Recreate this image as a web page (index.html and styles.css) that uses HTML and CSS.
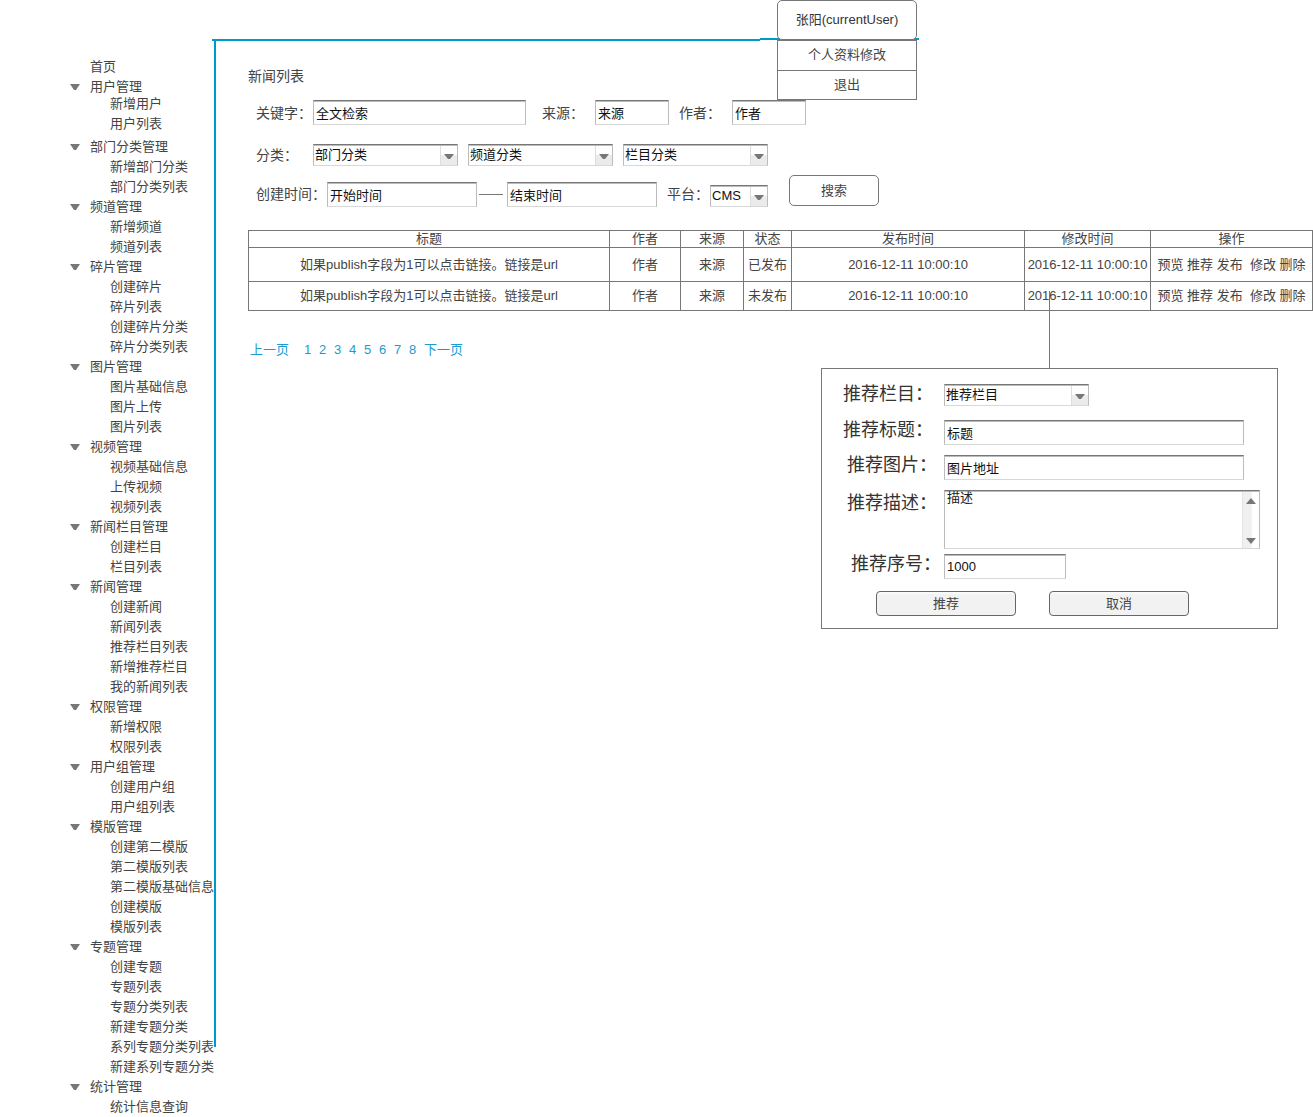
FILE: index.html
```html
<!DOCTYPE html>
<html lang="zh-CN">
<head>
<meta charset="utf-8">
<meta name="viewport" content="width=device-width, initial-scale=1">
<title>新闻列表</title>
<link rel="stylesheet" href="styles.css">
</head>
<body>
<div class="page">
  <nav class="sidebar">
    <a class="home" href="#">首页</a>
    <details class="compact" open><summary>用户管理</summary><ul><li><a href="#">新增用户</a></li><li><a href="#">用户列表</a></li></ul></details>
    <details open><summary>部门分类管理</summary><ul><li><a href="#">新增部门分类</a></li><li><a href="#">部门分类列表</a></li></ul></details>
    <details open><summary>频道管理</summary><ul><li><a href="#">新增频道</a></li><li><a href="#">频道列表</a></li></ul></details>
    <details open><summary>碎片管理</summary><ul><li><a href="#">创建碎片</a></li><li><a href="#">碎片列表</a></li><li><a href="#">创建碎片分类</a></li><li><a href="#">碎片分类列表</a></li></ul></details>
    <details open><summary>图片管理</summary><ul><li><a href="#">图片基础信息</a></li><li><a href="#">图片上传</a></li><li><a href="#">图片列表</a></li></ul></details>
    <details open><summary>视频管理</summary><ul><li><a href="#">视频基础信息</a></li><li><a href="#">上传视频</a></li><li><a href="#">视频列表</a></li></ul></details>
    <details open><summary>新闻栏目管理</summary><ul><li><a href="#">创建栏目</a></li><li><a href="#">栏目列表</a></li></ul></details>
    <details open><summary>新闻管理</summary><ul><li><a href="#">创建新闻</a></li><li><a href="#">新闻列表</a></li><li><a href="#">推荐栏目列表</a></li><li><a href="#">新增推荐栏目</a></li><li><a href="#">我的新闻列表</a></li></ul></details>
    <details open><summary>权限管理</summary><ul><li><a href="#">新增权限</a></li><li><a href="#">权限列表</a></li></ul></details>
    <details open><summary>用户组管理</summary><ul><li><a href="#">创建用户组</a></li><li><a href="#">用户组列表</a></li></ul></details>
    <details open><summary>模版管理</summary><ul><li><a href="#">创建第二模版</a></li><li><a href="#">第二模版列表</a></li><li><a href="#">第二模版基础信息</a></li><li><a href="#">创建模版</a></li><li><a href="#">模版列表</a></li></ul></details>
    <details open><summary>专题管理</summary><ul><li><a href="#">创建专题</a></li><li><a href="#">专题列表</a></li><li><a href="#">专题分类列表</a></li><li><a href="#">新建专题分类</a></li><li><a href="#">系列专题分类列表</a></li><li><a href="#">新建系列专题分类</a></li></ul></details>
    <details open><summary>统计管理</summary><ul><li><a href="#">统计信息查询</a></li></ul></details>
  </nav>

  <div class="content">
    <header class="topbar">
      <div class="rule"></div>
      <div class="rule-end">
        <div class="user-menu">
          <button class="user-name" type="button">张阳(currentUser)</button>
          <ul>
            <li><a href="#">个人资料修改</a></li>
            <li><a href="#">退出</a></li>
          </ul>
        </div>
      </div>
    </header>

    <main class="main">
      <h1>新闻列表</h1>

      <form class="search">
        <div class="row row-text">
          <label for="keyword">关键字：</label>
          <input class="box keyword" id="keyword" type="text" value="全文检索">
          <label class="next" for="source">来源：</label>
          <input class="box short" id="source" type="text" value="来源">
          <label class="near" for="author">作者：</label>
          <input class="box short" id="author" type="text" value="作者">
        </div>
        <div class="row row-category">
          <label for="department">分类：</label>
          <div class="select"><select id="department"><option>部门分类</option></select></div>
          <div class="select"><select aria-label="频道分类"><option>频道分类</option></select></div>
          <div class="select"><select aria-label="栏目分类"><option>栏目分类</option></select></div>
        </div>
        <div class="row row-date">
          <label for="start">创建时间：</label>
          <input class="box date" id="start" type="text" value="开始时间">
          <span class="dash"></span>
          <input class="box date" type="text" value="结束时间" aria-label="结束时间">
          <label class="near" for="platform">平台：</label>
          <div class="select platform"><select id="platform"><option>CMS</option></select></div>
          <button class="search-button" type="submit">搜索</button>
        </div>
      </form>

      <table class="news">
        <colgroup><col class="c-title"><col class="c-author"><col class="c-source"><col class="c-state"><col class="c-publish"><col class="c-modify"><col class="c-action"></colgroup>
        <thead>
          <tr><th>标题</th><th>作者</th><th>来源</th><th>状态</th><th>发布时间</th><th>修改时间</th><th>操作</th></tr>
        </thead>
        <tbody>
          <tr>
            <td>如果publish字段为1可以点击链接。链接是url</td><td>作者</td><td>来源</td><td>已发布</td><td>2016-12-11 10:00:10</td><td>2016-12-11 10:00:10</td>
            <td><a href="#">预览</a> <a href="#">推荐</a> <a href="#">发布</a>&nbsp; <a href="#">修改</a> <a href="#">删除</a></td>
          </tr>
          <tr>
            <td>如果publish字段为1可以点击链接。链接是url</td><td>作者</td><td>来源</td><td>未发布</td><td>2016-12-11 10:00:10</td><td>2016-12-11 10:00:10</td>
            <td><a href="#">预览</a> <a href="#">推荐</a> <a href="#">发布</a>&nbsp; <a href="#">修改</a> <a href="#">删除</a></td>
          </tr>
        </tbody>
      </table>

      <nav class="pager">
        <a class="step" href="#">上一页</a>
        <a href="#">1</a><a href="#">2</a><a href="#">3</a><a href="#">4</a><a href="#">5</a><a href="#">6</a><a href="#">7</a><a href="#">8</a>
        <a class="step" href="#">下一页</a>
      </nav>

      <form class="recommend">
        <div class="field field-column">
          <label for="r-column">推荐栏目：</label>
          <div class="select"><select id="r-column"><option>推荐栏目</option></select></div>
        </div>
        <div class="field">
          <label for="r-title">推荐标题：</label>
          <input class="box long" id="r-title" type="text" value="标题">
        </div>
        <div class="field indent">
          <label for="r-image">推荐图片：</label>
          <input class="box long" id="r-image" type="text" value="图片地址">
        </div>
        <div class="field field-area indent">
          <label for="r-desc">推荐描述：</label>
          <div class="area">
            <textarea id="r-desc">描述</textarea>
            <div class="scroll">
              <svg width="10" height="6" viewBox="0 0 10 6"><path d="M5 0L10 6H0Z" fill="#777"/></svg>
              <svg width="10" height="6" viewBox="0 0 10 6"><path d="M0 0H10L5 6Z" fill="#777"/></svg>
            </div>
          </div>
        </div>
        <div class="field indent-more">
          <label for="r-order">推荐序号：</label>
          <input class="box order" id="r-order" type="text" value="1000">
        </div>
        <div class="actions">
          <button type="submit">推荐</button>
          <button type="button">取消</button>
        </div>
      </form>
    </main>
  </div>
</div>
</body>
</html>
```
FILE: styles.css
```css
* {
  box-sizing: border-box;
}

body {
  margin: 0;
  background: #fff;
  color: #444;
  font: 13px/20px "Liberation Sans", "Noto Sans CJK SC", sans-serif;
}

ul {
  list-style: none;
  margin: 0;
  padding: 0;
}

a {
  color: inherit;
  text-decoration: none;
}

input,
select,
textarea,
button {
  margin: 0;
  font: inherit;
}

.page {
  display: grid;
  grid-template-columns: 212px 1fr;
}

/* Sidebar tree */
.sidebar {
  padding: 57px 0 0 70px;
  white-space: nowrap;
}

.sidebar .home {
  display: block;
  padding-left: 20px;
}

.sidebar summary {
  display: flex;
  align-items: center;
  gap: 10px;
  list-style: none;
  cursor: pointer;
}

.sidebar summary::before {
  content: "";
  width: 10px;
  height: 6px;
  background: #777;
  clip-path: polygon(0 0, 100% 0, 60% 100%, 40% 100%);
}

.sidebar ul {
  padding-left: 40px;
}

.sidebar li {
  height: 20px;
}

.sidebar .compact ul {
  margin: -3px 0 3px;
}

/* Top rule and user menu */
.content {
  display: flex;
  flex-direction: column;
}

.topbar {
  display: flex;
  align-items: flex-end;
  height: 41px;
}

.topbar::after {
  content: "";
  flex: 394 0 0;
}

.rule {
  flex: 548 0 0;
  height: 2px;
  background: #0099cc;
}

.rule-end {
  position: relative;
  flex: 159 0 0;
  height: 3px;
  border-bottom: 1px solid #fff;
  background: #0099cc;
}

.user-menu {
  position: absolute;
  top: -38px;
  left: 17px;
  width: 140px;
  text-align: center;
}

.user-name {
  display: block;
  width: 100%;
  height: 40px;
  padding: 0;
  border: 1px solid #777;
  border-radius: 5px;
  background: #fff;
  color: #333;
}

.user-menu ul {
  border: 1px solid #777;
  background: #fff;
}

.user-menu li {
  height: 29px;
  line-height: 28px;
}

.user-menu li + li {
  border-top: 1px solid #777;
}

/* Main column */
.main {
  flex: 1;
  margin: 0 0 70px 2px;
  padding: 25px 0 0 32px;
  border-left: 2px solid #0099cc;
}

h1 {
  margin: 0 0 14px;
  font-size: 14px;
  font-weight: 400;
  line-height: 20px;
}

.box {
  width: 150px;
  height: 25px;
  padding: 0 2px 1px;
  border: 1px solid #bbb;
  border-top-color: #777;
  border-bottom-color: #d8d8d8;
  border-radius: 0;
  background: #fff;
  box-shadow: inset 0 1px #bbb;
  color: #111;
}

.select {
  position: relative;
  width: 145px;
  height: 22px;
}

.select select {
  appearance: none;
  display: block;
  width: 100%;
  height: 100%;
  padding: 0 18px 0 1px;
  border: 1px solid #bbb;
  border-top-color: #777;
  border-bottom-color: #d8d8d8;
  border-radius: 0;
  background: linear-gradient(#fff 50%, #ebebeb 50%) right / 16px 100% no-repeat #fff;
  box-shadow: inset 0 1px #bbb;
  color: #111;
}

.select::after {
  content: "";
  position: absolute;
  top: 10px;
  right: 4px;
  width: 10px;
  height: 5px;
  background: #777;
  clip-path: polygon(0 0, 100% 0, 60% 100%, 40% 100%);
  pointer-events: none;
}

.select::before {
  content: "";
  position: absolute;
  top: 2px;
  right: 17px;
  bottom: 1px;
  border-left: 1px solid #ddd;
}

/* Search form */
.search {
  padding-left: 8px;
}

.row {
  display: flex;
  align-items: center;
}

.row label {
  flex: none;
  font-size: 14px;
}

.row .next {
  margin-left: 16px;
}

.row .near {
  margin-left: 10px;
}

.row-text label {
  width: 53px;
}

.row-text label:first-child {
  width: 57px;
}

.keyword {
  width: 213px;
}

.short {
  width: 74px;
}

.row-category {
  gap: 10px;
  margin-top: 19px;
}

.row-category label {
  width: 47px;
}

.row-date {
  align-items: flex-end;
  height: 32px;
  margin-top: 9px;
}

.row-date label {
  padding-right: 1px;
  line-height: 25px;
}

.dash {
  width: 24px;
  height: 13px;
  margin: 0 4px 0 2px;
  border-top: 1px solid #777;
}

.platform {
  width: 58px;
}

.search-button {
  align-self: flex-start;
  width: 90px;
  height: 31px;
  margin-left: 21px;
  padding: 0;
  border: 1px solid #777;
  border-radius: 5px;
  background: #fff;
  color: #444;
}

/* News table */
.news {
  width: 100%;
  margin-top: 23px;
  border-collapse: collapse;
  table-layout: fixed;
  text-align: center;
}

.news th,
.news td {
  padding: 0;
  border: 1px solid #777;
  font-weight: 400;
  white-space: nowrap;
}

.news th {
  height: 17px;
  line-height: 16px;
}

.news td {
  height: 34px;
}

.news tr:last-child td {
  height: 29px;
}

.c-title { width: 361px; }
.c-author { width: 71px; }
.c-source { width: 63px; }
.c-state { width: 48px; }
.c-publish { width: 233px; }
.c-modify { width: 126px; }
.c-action { width: 162px; }

/* Pagination */
.pager {
  display: flex;
  gap: 8px;
  margin: 29px 0 8px 2px;
  color: #1c9bd1;
}

.pager a {
  width: 7px;
}

.pager .step {
  width: 46px;
  white-space: nowrap;
}

/* Recommendation popover with its connector */
.recommend {
  position: relative;
  display: flex;
  flex-direction: column;
  gap: 10px;
  width: 457px;
  margin: 0 35px 0 auto;
  padding: 15px 17px 12px 21px;
  border: 1px solid #777;
  background: #fff;
}

.recommend::before {
  content: "";
  position: absolute;
  bottom: 100%;
  left: 227px;
  height: 78px;
  border-left: 1px solid #777;
}

.field {
  display: grid;
  grid-template-columns: 101px 1fr;
  align-items: start;
  height: 25px;
}

.field label {
  color: #333;
  font-size: 18px;
  line-height: 20px;
  white-space: nowrap;
}

.field-column {
  height: 22px;
  margin-bottom: 4px;
}

.field-area {
  height: 59px;
  margin-bottom: -5px;
}

.field-area label {
  padding-top: 3px;
}

.indent label {
  padding-left: 4px;
}

.indent-more label {
  padding-left: 8px;
}

.long {
  width: 300px;
}

.order {
  width: 122px;
}

.area {
  display: flex;
  height: 59px;
  border: 1px solid #bbb;
  border-top-color: #777;
  border-bottom-color: #d8d8d8;
  box-shadow: inset 0 1px #bbb;
}

.area textarea {
  flex: 1;
  padding: 0 2px;
  border: 0;
  background: none;
  color: #222;
  line-height: 14px;
  resize: none;
  overflow: hidden;
}

.scroll {
  display: flex;
  flex-direction: column;
  justify-content: space-between;
  align-items: center;
  width: 17px;
  margin-top: 1px;
  padding: 6px 0 4px;
  border-left: 1px solid #e4e4e4;
  background: linear-gradient(to right, #f0f0f0 50%, #fff 60%);
}

.actions {
  display: flex;
  gap: 33px;
  margin: 2px 0 0 33px;
}

.actions button {
  width: 140px;
  height: 25px;
  padding: 0;
  border: 1px solid #666;
  border-radius: 4px;
  background: #f2f2f2;
  box-shadow: inset 0 2px #fafafa;
  color: #444;
}
```
